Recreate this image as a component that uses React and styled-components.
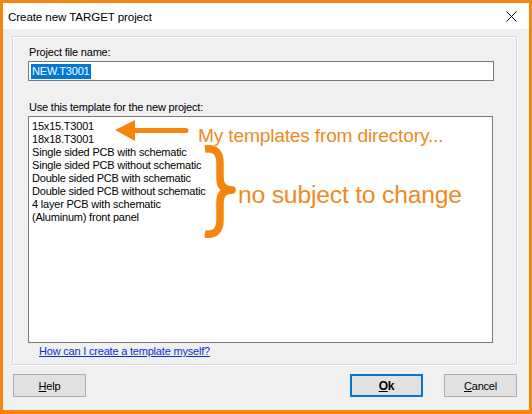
import React from "react";
import styled, { createGlobalStyle } from "styled-components";

const Global = createGlobalStyle`
  html, body { margin: 0; padding: 0; background: #f0f0f0; }
  * { box-sizing: border-box; }
`;

const ORANGE = "#f5850f";
const NOTE = "#ef8a1f";
const UI_FONT = `"Liberation Sans", Arial, sans-serif`;

const Window = styled.div`
  position: relative;
  width: 532px;
  height: 414px;
  border: 3px solid ${ORANGE};
  border-bottom-width: 4px;
  background: #f0f0f0;
  display: flex;
  flex-direction: column;
  font-family: ${UI_FONT};
  font-size: 11px;
  letter-spacing: -0.2px;
  color: #000;
  overflow: hidden;
`;

const TitleBar = styled.div`
  height: 26px;
  background: #fff;
  display: flex;
  align-items: center;
  justify-content: space-between;
  padding: 0 12px 0 5px;
  font-size: 11.6px;
  letter-spacing: -0.1px;
`;

const Body = styled.div`
  flex: 1;
  display: flex;
  flex-direction: column;
  padding: 7px 12px 13px 9px;
`;

const Group = styled.div`
  height: 329px;
  border: 1px solid #d8d8d8;
  box-shadow: inset 1px 1px 0 #fff, 1px 1px 0 #fff;
  padding: 9px 22px 0 15px;
  display: flex;
  flex-direction: column;
`;

const Label = styled.div`
  line-height: 13px;
  margin-top: ${(p) => p.$top || 0}px;
  padding-left: 1px;
`;

const TextInput = styled.div`
  margin-top: 2px;
  height: 20px;
  border: 1px solid #7a7a7a;
  background: #fff;
  display: flex;
  align-items: center;
  padding-left: 2px;
`;

const Selected = styled.span`
  background: #0078d7;
  color: #fff;
  line-height: 15px;
  padding: 0 1px;
`;

const ListBox = styled.div`
  margin-top: 2px;
  height: 227px;
  border: 1px solid #7a7a7a;
  background: #fff;
  padding: 3px 3px 0;
  margin-right: 1px;
`;

const Item = styled.div`
  line-height: 13px;
  white-space: nowrap;
`;

const Link = styled.a`
  margin: 2px 0 0 11px;
  color: #0b2fd6;
  text-decoration: underline;
  line-height: 13px;
  cursor: pointer;
`;

const ButtonRow = styled.div`
  display: flex;
  margin-top: 9px;
  padding-left: 1px;
`;

const Button = styled.div`
  width: 73px;
  height: 23px;
  background: #e1e1e1;
  border: ${(p) => (p.$default ? "2px solid #0078d7" : "1px solid #adadad")};
  display: flex;
  align-items: center;
  justify-content: center;
  font-weight: ${(p) => (p.$default ? "bold" : "normal")};
  font-size: ${(p) => (p.$default ? "12px" : "11px")};
  margin-left: ${(p) => p.$left || 0}px;
`;

const Spacer = styled.div`
  flex: 1;
`;

const U = styled.span`
  text-decoration: underline;
`;

const Note = styled.div`
  position: absolute;
  color: ${NOTE};
  font-family: ${UI_FONT};
  white-space: nowrap;
  left: ${(p) => p.$x}px;
  top: ${(p) => p.$y}px;
  font-size: ${(p) => p.$size}px;
  line-height: 1;
`;

const Overlay = styled.svg`
  position: absolute;
  left: -3px;
  top: -3px;
  pointer-events: none;
`;

const items = [
  "15x15.T3001",
  "18x18.T3001",
  "Single sided PCB with schematic",
  "Single sided PCB without schematic",
  "Double sided PCB with schematic",
  "Double sided PCB without schematic",
  "4 layer PCB with schematic",
  "(Aluminum) front panel",
];

export default function App() {
  return (
    <>
      <Global />
      <Window>
        <TitleBar>
          <span>Create new TARGET project</span>
          <svg width="11" height="11" viewBox="0 0 11 11">
            <path d="M0.5 0.5 L10.5 10.5 M10.5 0.5 L0.5 10.5" stroke="#000" strokeWidth="1" />
          </svg>
        </TitleBar>
        <Body>
          <Group>
            <Label>Project file name:</Label>
            <TextInput>
              <Selected>NEW.T3001</Selected>
            </TextInput>
            <Label $top={20}>Use this template for the new project:</Label>
            <ListBox>
              {items.map((t) => (
                <Item key={t}>{t}</Item>
              ))}
            </ListBox>
            <Link>How can I create a template myself?</Link>
          </Group>
          <ButtonRow>
            <Button>
              <U>H</U>elp
            </Button>
            <Spacer />
            <Button $default>
              <U>O</U>k
            </Button>
            <Button $left={21}>
              <U>C</U>ancel
            </Button>
          </ButtonRow>
        </Body>
        <Overlay width="532" height="414" viewBox="0 0 532 414">
          <path d="M131 130.5 L186 130.5" stroke={ORANGE} strokeWidth="5" strokeLinecap="round" />
          <path d="M115 130 L135 120 L135 141 Z" fill={ORANGE} />
          <path
            d="M205 149 Q220 147 220 163 L220 178 Q220 190 232 190 Q220 190 220 202 L220 220 Q220 236 205 234"
            stroke={ORANGE}
            strokeWidth="7.5"
            fill="none"
            strokeLinejoin="round"
          />
        </Overlay>
        <Note $x={195} $y={123} $size={19.2}>
          My templates from directory...
        </Note>
        <Note $x={235} $y={180} $size={24.7}>
          no subject to change
        </Note>
      </Window>
    </>
  );
}
